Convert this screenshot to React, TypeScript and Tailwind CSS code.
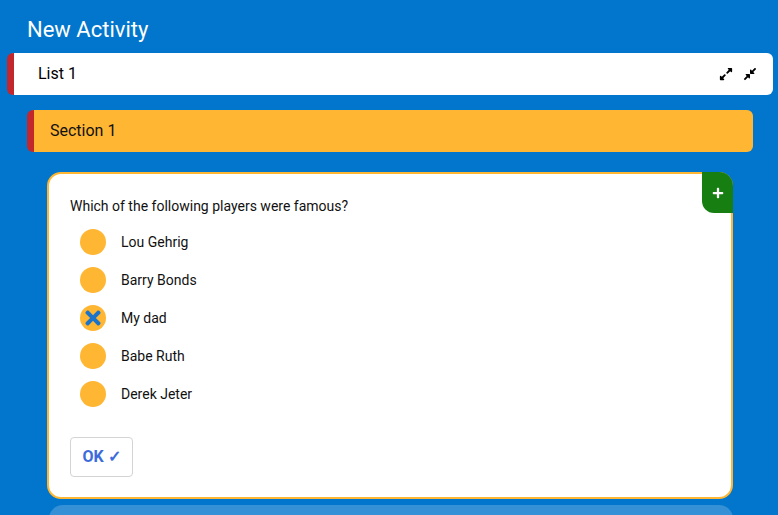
import React from 'react';
import { FaExpandAlt, FaCompressAlt, FaPlus, FaTimes } from 'react-icons/fa';

const options = [
  { label: 'Lou Gehrig', checked: false },
  { label: 'Barry Bonds', checked: false },
  { label: 'My dad', checked: true },
  { label: 'Babe Ruth', checked: false },
  { label: 'Derek Jeter', checked: false },
];

export default function App() {
  return (
    <div className="w-[778px] h-[515px] overflow-hidden bg-[#0276cc] font-['Roboto',sans-serif]">
      <h1 className="pt-[13px] pl-[27px] text-[22px] leading-[33px] text-white">New Activity</h1>

      <div className="mt-[7px] ml-[7px] w-[766px] h-[42px] bg-white rounded-md border-l-[7px] border-[#c1272d] flex items-center justify-between pl-[24px] pr-[16px]">
        <span className="text-[16px] text-black">List 1</span>
        <div className="flex items-center gap-[10px] text-black">
          <FaExpandAlt className="w-[14px] h-[14px]" />
          <FaCompressAlt className="w-[14px] h-[14px]" />
        </div>
      </div>

      <div className="mt-[15px] ml-[27px] w-[726px] h-[42px] bg-[#ffb632] rounded-md border-l-[7px] border-[#c1272d] flex items-center pl-[16px]">
        <span className="text-[16px] text-[#111]">Section 1</span>
      </div>

      <div className="relative mt-[20px] ml-[47px] w-[686px] h-[327px] bg-white rounded-[14px] border-2 border-[#ffb632] pt-[22px] pl-[21px]">
        <div className="absolute -top-[2px] -right-[2px] w-[31px] h-[41px] bg-[#177f12] rounded-tr-[14px] rounded-bl-[12px] flex items-center justify-center">
          <FaPlus className="w-[12px] h-[12px] text-white" />
        </div>
        <p className="text-[14px] leading-[20px] text-[#111]">Which of the following players were famous?</p>
        <div className="mt-[13px] flex flex-col gap-[12px] pl-[10px]">
          {options.map((o) => (
            <div key={o.label} className="flex items-center h-[26px]">
              <div className="w-[26px] h-[26px] rounded-full bg-[#ffb632] flex items-center justify-center">
                {o.checked && <FaTimes className="w-[20px] h-[22px] text-[#1b74c9]" />}
              </div>
              <span className="ml-[15px] text-[14px] text-[#111]">{o.label}</span>
            </div>
          ))}
        </div>
        <button className="mt-[30px] w-[63px] h-[40px] border border-[#d4d4d4] rounded-[4px] bg-white text-[16px] font-bold text-[#3d6bdc] flex items-center justify-center gap-[4px]">
          <span>OK</span>
          <span className="font-bold">✓</span>
        </button>
      </div>

      <div className="mt-[6px] ml-[49px] w-[684px] h-[20px] bg-[#3690d6] rounded-t-[14px]" />
    </div>
  );
}
